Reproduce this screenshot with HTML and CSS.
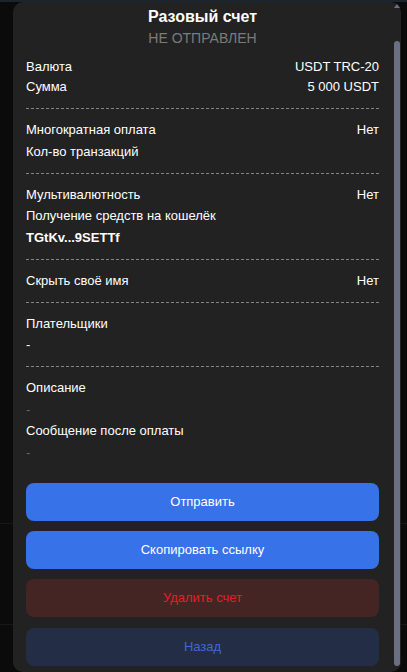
FILE: index.html
```html
<!DOCTYPE html>
<html lang="ru">
<head>
<meta charset="utf-8">
<title>Разовый счет</title>
<link rel="stylesheet" href="styles.css">
</head>
<body>
<div class="app">
  <div class="sheet">
    <div class="content">
      <div class="header">
        <div class="title">Разовый счет</div>
        <div class="status">НЕ ОТПРАВЛЕН</div>
      </div>

      <div class="section first">
        <div class="row"><span>Валюта</span><span>USDT TRC-20</span></div>
        <div class="row"><span>Сумма</span><span>5 000 USDT</span></div>
      </div>

      <div class="section">
        <div class="row"><span>Многократная оплата</span><span>Нет</span></div>
        <div class="row"><span>Кол-во транзакций</span></div>
      </div>

      <div class="section">
        <div class="row"><span>Мультивалютность</span><span>Нет</span></div>
        <div class="row"><span>Получение средств на кошелёк</span></div>
        <div class="row wallet"><span>TGtKv...9SETTf</span></div>
      </div>

      <div class="section">
        <div class="row"><span>Скрыть своё имя</span><span>Нет</span></div>
      </div>

      <div class="section">
        <div class="row"><span>Плательщики</span></div>
        <div class="row"><span>-</span></div>
      </div>

      <div class="section last">
        <div class="row"><span>Описание</span></div>
        <div class="row muted"><span>-</span></div>
        <div class="row"><span>Сообщение после оплаты</span></div>
        <div class="row muted"><span>-</span></div>
      </div>

      <div class="actions">
        <button class="btn primary">Отправить</button>
        <button class="btn primary">Скопировать ссылку</button>
        <button class="btn danger">Удалить счет</button>
        <button class="btn back">Назад</button>
      </div>
    </div>
    <div class="scrollbar">
      <div class="arrow"></div>
      <div class="thumb"></div>
    </div>
  </div>
</div>
</body>
</html>
```

FILE: styles.css
```css
* { box-sizing: border-box; }

html, body {
  margin: 0;
  padding: 0;
  background: #0b0b0b;
}

body {
  font-family: "Liberation Sans", Arial, sans-serif;
  color: #ffffff;
  width: 407px;
  height: 672px;
  overflow: hidden;
}

.app {
  height: 672px;
  padding: 2px 0 0 13px;
  background:
    linear-gradient(#1c2430, #1c2430) 0 0 / 100% 2px no-repeat,
    linear-gradient(#181818, #181818) 0 523px / 100% 1px no-repeat,
    linear-gradient(#181818, #181818) 0 624px / 100% 1px no-repeat,
    #0b0b0b;
}

.sheet {
  width: 388px;
  height: 670px;
  background: #222222;
  border-radius: 10px;
  display: flex;
}

.content {
  flex: 1;
  padding: 5px 15px 0 13px;
  display: flex;
  flex-direction: column;
}

.header {
  text-align: center;
  margin-bottom: 9px;
}

.title {
  font-size: 16px;
  font-weight: bold;
  line-height: 20px;
}

.status {
  margin-top: 1px;
  font-size: 14px;
  line-height: 20px;
  color: #7b7b7b;
}

.section {
  display: flex;
  flex-direction: column;
  gap: 1.5px;
  padding: 11px 0;
  border-bottom: 1px dashed #858585;
}

.section.first {
  padding-top: 0;
  gap: 0;
}

.section.last {
  border-bottom: 0;
}

.row {
  display: flex;
  justify-content: space-between;
  font-size: 13px;
  line-height: 20px;
}

.row.wallet {
  font-weight: bold;
}

.row.muted {
  color: #666666;
}

.actions {
  margin-top: 9px;
  display: flex;
  flex-direction: column;
  gap: 10px;
}

.btn {
  height: 38px;
  border: 0;
  border-radius: 8px;
  font-family: "Liberation Sans", Arial, sans-serif;
  font-size: 13px;
  cursor: pointer;
}

.btn.primary {
  background: #3872e8;
  color: #ffffff;
}

.btn.danger {
  background: #452424;
  color: #e41f2c;
}

.btn.back {
  margin-top: 1px;
  background: #232d45;
  color: #3e6ad6;
}

.scrollbar {
  width: 7px;
  display: flex;
  flex-direction: column;
  align-items: flex-start;
}

.arrow {
  margin-top: 2px;
  width: 0;
  height: 0;
  border-left: 3px solid transparent;
  border-right: 3px solid transparent;
  border-bottom: 4px solid #6b6f82;
}

.thumb {
  margin-top: 33px;
  margin-bottom: 6px;
  width: 6px;
  flex: 1;
  border-radius: 3px;
  background: #6b6f82;
}
```
